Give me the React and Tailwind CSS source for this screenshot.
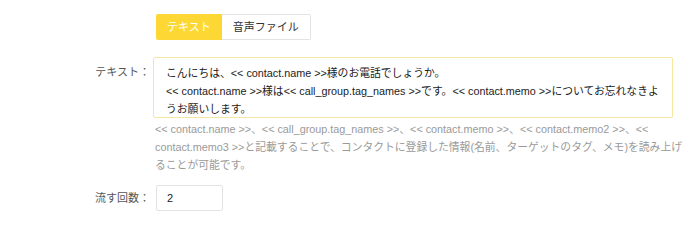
const font = { fontFamily: '"Liberation Sans", "Noto Sans CJK JP", sans-serif' };

export default function App() {
  return (
    <div className="w-[688px] h-[221px] bg-white pt-[14px] text-[#333] overflow-hidden" style={font}>
      <div className="flex">
        <div className="w-[156px] shrink-0" />
        <div className="flex h-[26px] text-[11px]">
          <button className="px-[11px] bg-[#fdd835] text-white rounded-l-[2px]">テキスト</button>
          <button className="px-[11px] bg-white border border-l-0 border-[#e3e3e3] rounded-r-[2px]">音声ファイル</button>
        </div>
      </div>

      <div className="flex mt-[17px]">
        <div className="w-[153px] shrink-0 text-right text-[11px] text-[#555] pt-[6px] pr-[3px] leading-[18px]">テキスト：</div>
        <div className="w-[535px]">
          <div className="w-[520px] h-[61px] border border-[#f7e6a0] rounded-[2px] pl-[12px] pr-[4px] pt-[6px] text-[10.8px] leading-[18px] text-[#222]">
            こんにちは、&lt;&lt; contact.name &gt;&gt;様のお電話でしょうか。<br />
            &lt;&lt; contact.name &gt;&gt;様は&lt;&lt; call_group.tag_names &gt;&gt;です。&lt;&lt; contact.memo &gt;&gt;についてお忘れなきようお願いします。
          </div>
          <p className="mt-[2px] pl-[2px] text-[10.8px] leading-[18px] text-[#9a9a9a]">
            &lt;&lt; contact.name &gt;&gt;、&lt;&lt; call_group.tag_names &gt;&gt;、&lt;&lt; contact.memo &gt;&gt;、&lt;&lt; contact.memo2 &gt;&gt;、&lt;&lt;
            contact.memo3 &gt;&gt;と記載することで、コンタクトに登録した情報(名前、ターゲットのタグ、メモ)を読み上げることが可能です。
          </p>
        </div>
      </div>

      <div className="flex items-center mt-[11px]">
        <div className="w-[153px] shrink-0 text-right text-[11px] text-[#555] pr-[3px]">流す回数：</div>
        <div className="ml-[3px] w-[67px] h-[26px] border border-[#e3e3e3] rounded-[2px] flex items-center pl-[10px] text-[11px] text-[#222]">2</div>
      </div>
    </div>
  );
}
